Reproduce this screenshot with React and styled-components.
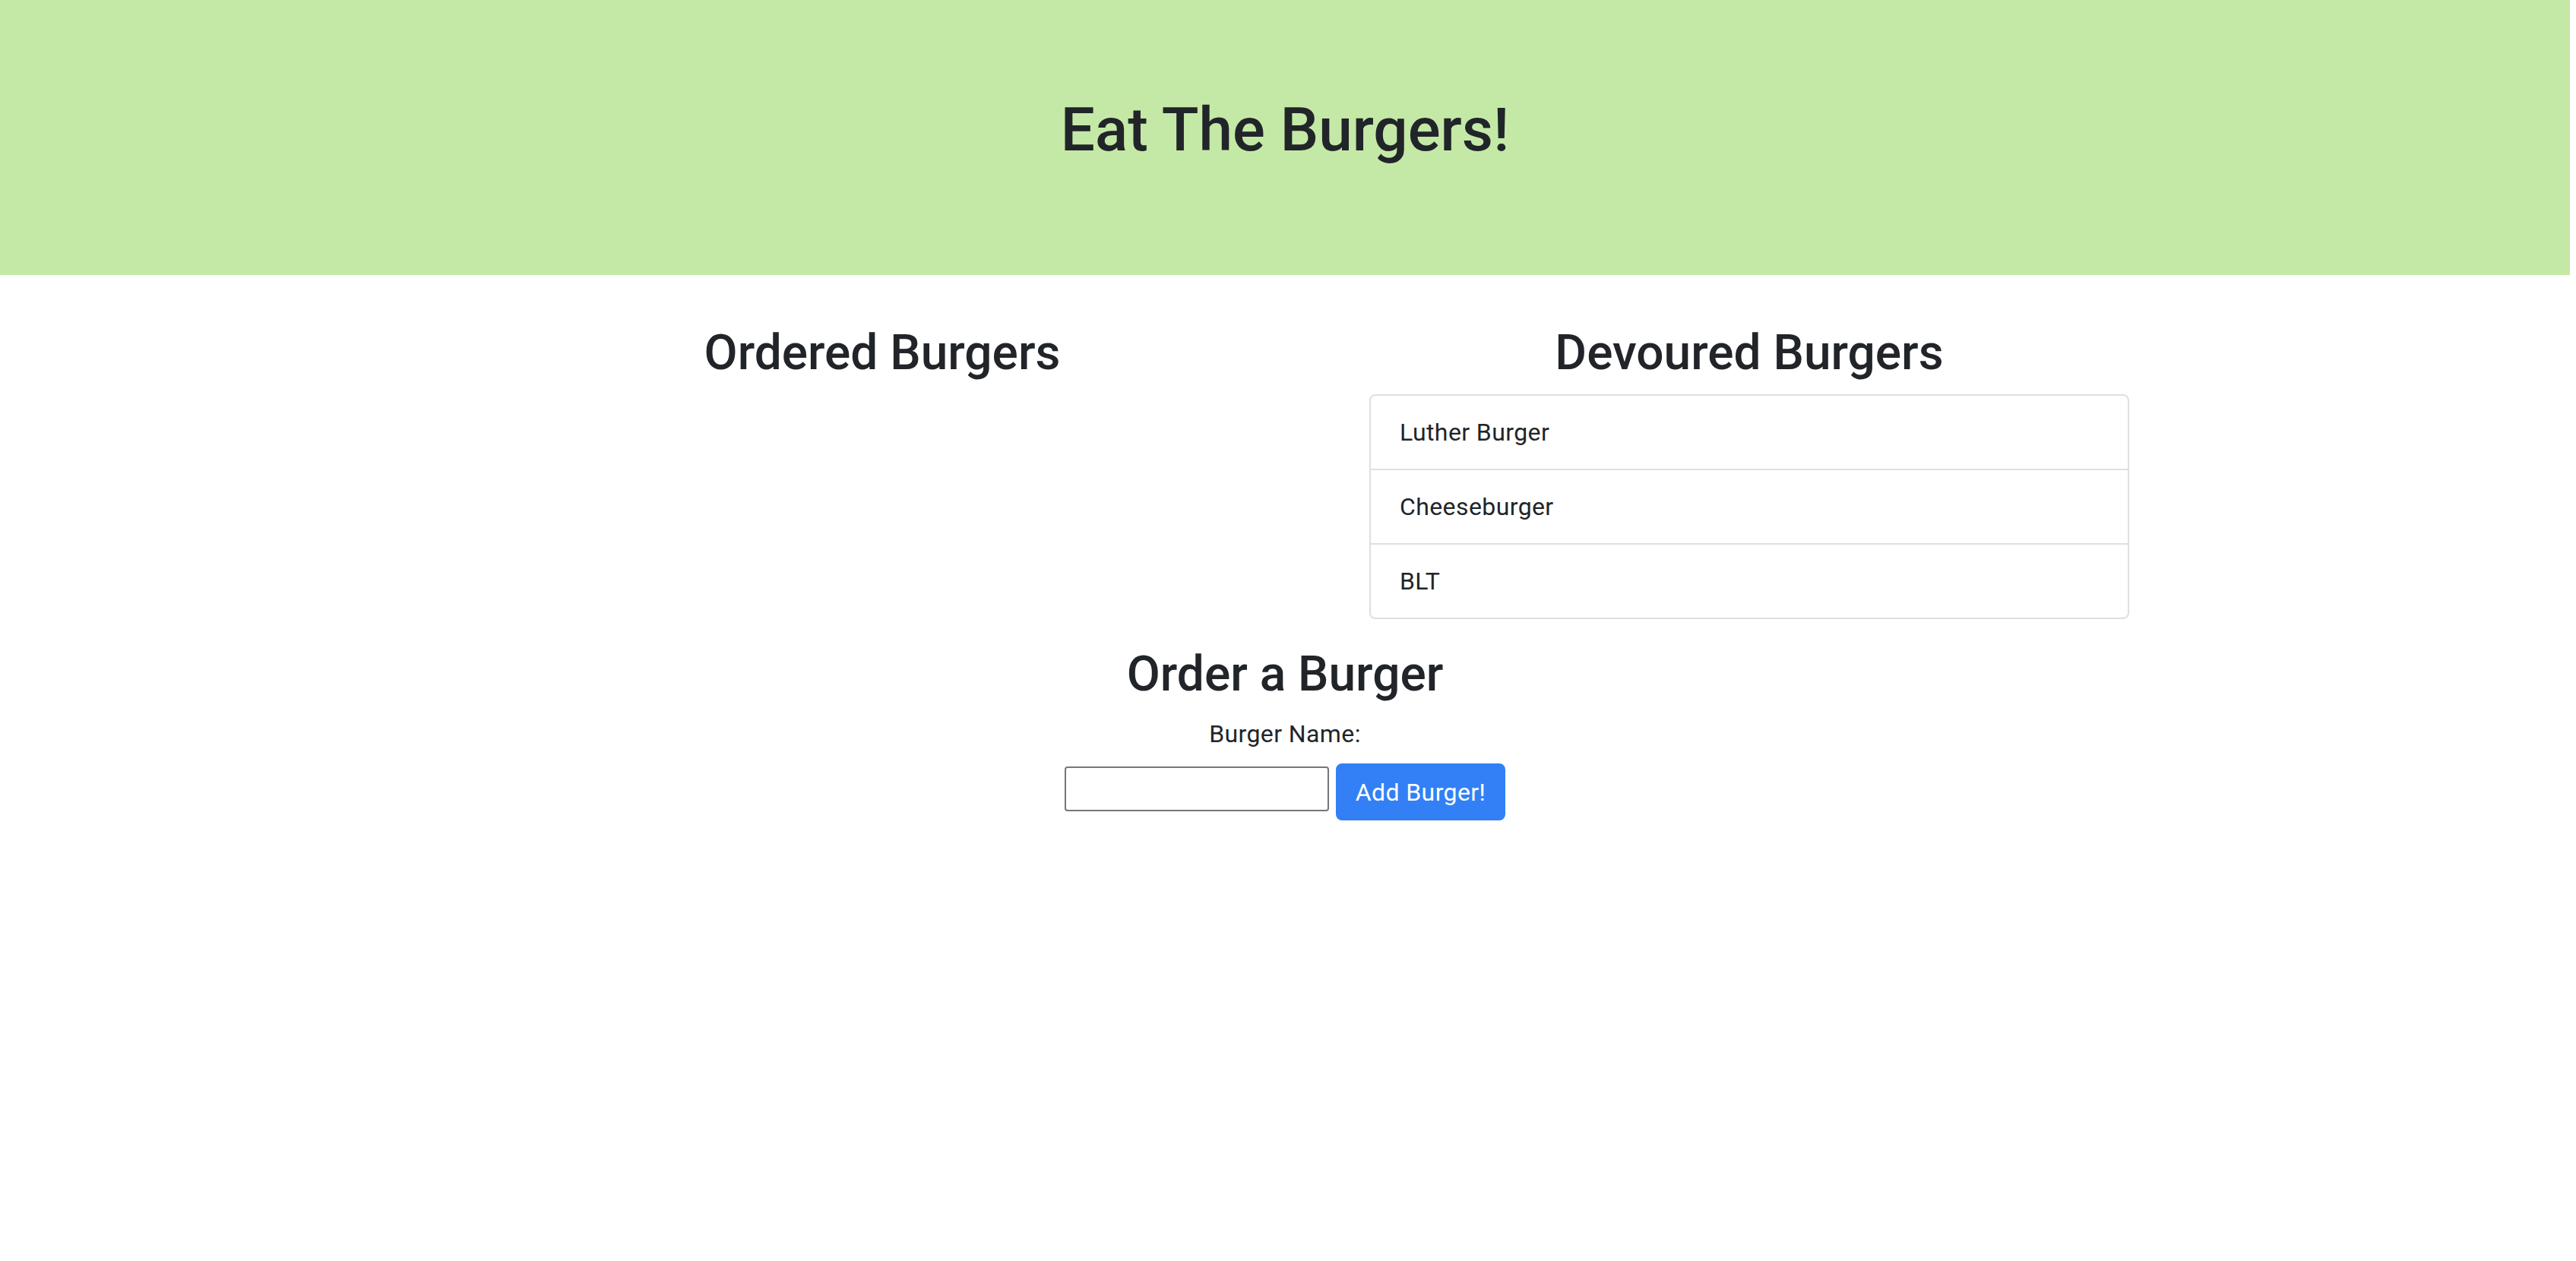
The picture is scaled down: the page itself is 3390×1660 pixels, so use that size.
import React from "react";
import styled, { createGlobalStyle } from "styled-components";

const GlobalStyle = createGlobalStyle`
  html, body {
    margin: 0;
    padding: 0;
    background: #ffffff;
  }
  body {
    font-family: Roboto, Inter, "Liberation Sans", sans-serif;
    color: #212529;
    font-size: 32px;
    line-height: 48px;
    letter-spacing: 0.4px;
  }
  * { box-sizing: border-box; }
`;

const Page = styled.div`
  width: 3390px;
  padding-right: 8px;
`;

const Jumbotron = styled.header`
  background: #c4e9a6;
  height: 362px;
  padding-top: 123px;
  margin-bottom: 64px;
  text-align: center;
`;

const Title = styled.h1`
  margin: 0;
  font-size: 80px;
  line-height: 96px;
  font-weight: 500;
  letter-spacing: 0;
  color: #212529;
`;

const Columns = styled.main`
  display: grid;
  grid-template-columns: 1000px 1000px;
  column-gap: 141px;
  padding-left: 661px;
`;

const Column = styled.section`
  display: flex;
  flex-direction: column;
`;

const SectionHeading = styled.h2`
  margin: ${(p) => (p.$spaced ? "34px 0 16px" : "0 0 16px")};
  font-size: 64px;
  line-height: 77px;
  font-weight: 500;
  letter-spacing: 0;
  text-align: center;
  color: #212529;
`;

const List = styled.ul`
  list-style: none;
  margin: 0;
  padding: 0;
  border: 2px solid #dfdfdf;
  border-radius: 8px;
`;

const Item = styled.li`
  padding: 24px 38px;
  font-size: 32px;
  line-height: 48px;
  color: #212529;
  & + & {
    border-top: 2px solid #dfdfdf;
  }
`;

const OrderForm = styled.form`
  display: flex;
  flex-direction: column;
  align-items: center;
`;

const Label = styled.label`
  font-size: 32px;
  line-height: 48px;
  color: #212529;
`;

const InputRow = styled.div`
  display: flex;
  align-items: flex-start;
  gap: 9px;
  margin-top: 15px;
`;

const NameInput = styled.input`
  width: 348px;
  height: 59px;
  margin-top: 4px;
  border: 2px solid #767676;
  border-radius: 4px;
  padding: 2px 4px;
  font-family: inherit;
  font-size: 32px;
  background: #fff;
  outline: none;
`;

const AddButton = styled.button`
  height: 75px;
  padding: 12px 24px;
  border: 2px solid #3380f6;
  border-radius: 8px;
  background: #3380f6;
  color: #ffffff;
  font-family: inherit;
  font-size: 32px;
  line-height: 48px;
  font-weight: 400;
  letter-spacing: 0.4px;
  cursor: pointer;
`;

const devoured = ["Luther Burger", "Cheeseburger", "BLT"];

export default function App() {
  return (
    <Page>
      <GlobalStyle />
      <Jumbotron>
        <Title>Eat The Burgers!</Title>
      </Jumbotron>
      <Columns>
        <Column>
          <SectionHeading>Ordered Burgers</SectionHeading>
        </Column>
        <Column>
          <SectionHeading>Devoured Burgers</SectionHeading>
          <List>
            {devoured.map((b) => (
              <Item key={b}>{b}</Item>
            ))}
          </List>
        </Column>
      </Columns>
      <OrderForm onSubmit={(e) => e.preventDefault()}>
        <SectionHeading $spaced>Order a Burger</SectionHeading>
        <Label htmlFor="burger-name">Burger Name:</Label>
        <InputRow>
          <NameInput id="burger-name" type="text" />
          <AddButton type="submit">Add Burger!</AddButton>
        </InputRow>
      </OrderForm>
    </Page>
  );
}
